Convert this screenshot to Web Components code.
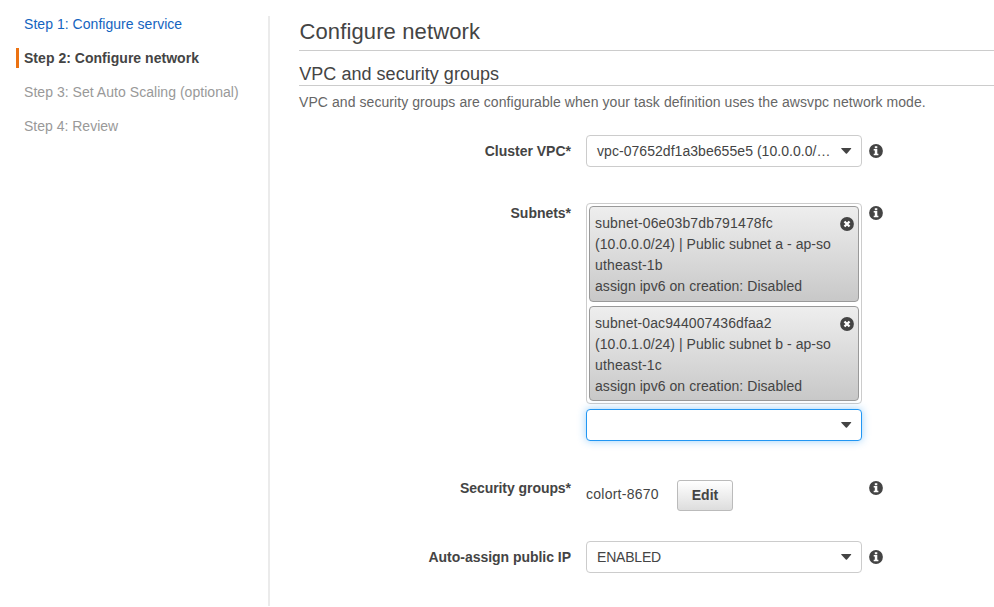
<!DOCTYPE html>
<html lang="en">
<head>
<meta charset="utf-8">
<title>Configure network</title>
<style>
html,body{margin:0;height:607px;overflow:hidden;background:#fff}
body{font:14px/20px "Liberation Sans",Arial,sans-serif;color:#444}
</style>
</head>
<body>
<wizard-page>
  <step-list slot="nav">
    <step-item state="done" style="letter-spacing:.04px">Step 1: Configure service</step-item>
    <step-item state="current" style="letter-spacing:.03px">Step 2: Configure network</step-item>
    <step-item style="letter-spacing:.04px">Step 3: Set Auto Scaling (optional)</step-item>
    <step-item>Step 4: Review</step-item>
  </step-list>
  <section-heading level="1">Configure network</section-heading>
  <section-heading level="2">VPC and security groups</section-heading>
  <help-text>VPC and security groups are configurable when your task definition uses the awsvpc network mode.</help-text>
  <form-row label="Cluster VPC*" style="margin-top:23px">
    <select-box style="letter-spacing:.05px">vpc-07652df1a3be655e5 (10.0.0.0/…</select-box>
  </form-row>
  <form-row top label="Subnets*" style="margin-top:36px;--label-spacing:-.03px">
    <tag-list>
      <subnet-tag><span style="letter-spacing:.15px">subnet-06e03b7db791478fc</span><span>(10.0.0.0/24) | Public subnet a - ap-so</span><span style="letter-spacing:.15px">utheast-1b</span><span>assign ipv6 on creation: Disabled</span></subnet-tag>
      <subnet-tag><span style="letter-spacing:.09px">subnet-0ac944007436dfaa2</span><span>(10.0.1.0/24) | Public subnet b - ap-so</span><span style="letter-spacing:.15px">utheast-1c</span><span>assign ipv6 on creation: Disabled</span></subnet-tag>
    </tag-list>
    <select-box focused></select-box>
  </form-row>
  <form-row top label="Security groups*" style="margin-top:37px;--label-spacing:-.06px">
    <group-value><span>colort-8670</span><push-button slot="action">Edit</push-button></group-value>
  </form-row>
  <form-row label="Auto-assign public IP" style="margin-top:30px;--label-spacing:-.03px">
    <select-box style="letter-spacing:-.2px">ENABLED</select-box>
  </form-row>
</wizard-page>
<script>
const define = (name, html) => customElements.define(name, class extends HTMLElement {
  constructor() {
    super();
    const t = document.createElement('template');
    t.innerHTML = html;
    this.attachShadow({mode: 'open'}).appendChild(t.content.cloneNode(true));
  }
  connectedCallback() {
    const label = this.shadowRoot.querySelector('.label');
    if (label) label.textContent = this.getAttribute('label');
  }
});
define('info-icon', `<style>:host{display:block;width:14px;height:14px}svg{display:block}</style>
<svg width="14" height="14" viewBox="0 0 14 14"><circle cx="7" cy="7" r="6.9" fill="#444"/><path fill="#fff" d="M5.8 2.3h2.5v2H5.8zM4.7 5.1h3.6v4.7h1.1v1.5H4.7V9.8h1.1V6.6H4.7z"/></svg>`);
define('close-icon', `<style>:host{display:block;width:14px;height:14px}svg{display:block}</style>
<svg width="14" height="14" viewBox="0 0 14 14"><circle cx="7" cy="7" r="6.9" fill="#444"/><path d="M4.5 4.5l5 5M9.5 4.5l-5 5" stroke="#fff" stroke-width="2.3"/></svg>`);
define('wizard-page', `<style>:host{display:grid;grid-template-columns:270px 1fr;column-gap:29px;height:590px;padding-top:16px}
nav{border-right:2px solid #ebebeb;padding-left:16px}main{min-width:0}</style>
<nav><slot name="nav"></slot></nav><main><slot></slot></main>`);
define('step-list', `<style>:host{display:flex;flex-direction:column;gap:14px}</style><slot></slot>`);
define('step-item', `<style>:host{display:block;height:20px;line-height:17px;padding-left:8px;color:#999;white-space:nowrap}
:host([state=done]){color:#1464c0}
:host([state=current]){color:#444;font-weight:bold;border-left:3px solid #ec7211;padding-left:5px;height:18px;padding-top:2px;margin:-2px 0 2px}</style><slot></slot>`);
define('section-heading', `<style>:host{display:block;border-bottom:1px solid #ccc;white-space:nowrap}
:host([level="1"]){font-size:22px;line-height:32px;height:34px;letter-spacing:.12px;text-indent:.5px}
:host([level="2"]){font-size:18px;line-height:24px;height:23px;padding-top:11px;letter-spacing:.03px;text-indent:.3px}</style><slot></slot>`);
define('help-text', `<style>:host{display:block;line-height:20px;padding-top:6px;color:#666;white-space:nowrap;letter-spacing:.068px}</style><slot></slot>`);
define('form-row', `<style>:host{display:grid;grid-template-columns:272px 291px 14px;column-gap:0;align-items:start}
.label{font-weight:bold;line-height:20px;text-align:right;padding-top:6px;white-space:nowrap;letter-spacing:var(--label-spacing,0)}
.field{margin-left:15px;width:276px}info-icon{margin:9px 0 0 7px}
:host([top]) .label{padding-top:0}:host([top]) info-icon{margin-top:3px}</style>
<div class="label"></div><div class="field"><slot></slot></div><info-icon></info-icon>`);
define('select-box', `<style>:host{display:flex;box-sizing:border-box;width:276px;height:32px;border:1px solid #ccc;border-radius:4px;background:#fff;align-items:center;justify-content:space-between;padding:0 9px 0 10px;white-space:nowrap}
:host([focused]){border-color:#2196f3;box-shadow:0 0 8px rgba(33,150,243,.45);margin-top:5px}svg{margin-top:-1px}</style>
<span><slot></slot></span><svg width="11" height="6" viewBox="0 0 11 6"><path d="M.6 0h9.3q.6.2.2.7L6 5.4q-.6.5-1.2 0L.3.7Q0 .2.6 0z" fill="#444"/></svg>`);
define('tag-list', `<style>:host{display:flex;flex-direction:column;gap:4px;box-sizing:border-box;width:276px;border:1px solid #ccc;border-radius:4px;padding:2px}</style><slot></slot>`);
define('subnet-tag', `<style>:host{display:flex;justify-content:space-between;box-sizing:border-box;height:96px;border:1px solid #999;border-radius:4px;background:linear-gradient(#eee,#c8c8c8);padding:6px 4px 0 5px}
:host(:last-child){height:95px}
.t{display:flex;flex-direction:column;line-height:21px;white-space:nowrap;letter-spacing:.05px}close-icon{margin-top:4px}</style><div class="t"><slot></slot></div><close-icon></close-icon>`);
define('push-button', `<style>:host{display:block;box-sizing:border-box;width:56px;height:31px;border:1px solid #bbb;border-radius:3px;background:linear-gradient(#fff,#ddd);font-weight:bold;line-height:29px;text-align:center}</style><slot></slot>`);
define('group-value', `<style>:host{display:flex;padding-top:2px;align-items:center}.v{width:91px;letter-spacing:.25px;margin-top:-3px}</style><div class="v"><slot></slot></div><slot name="action"></slot>`);
</script>
</body>
</html>
